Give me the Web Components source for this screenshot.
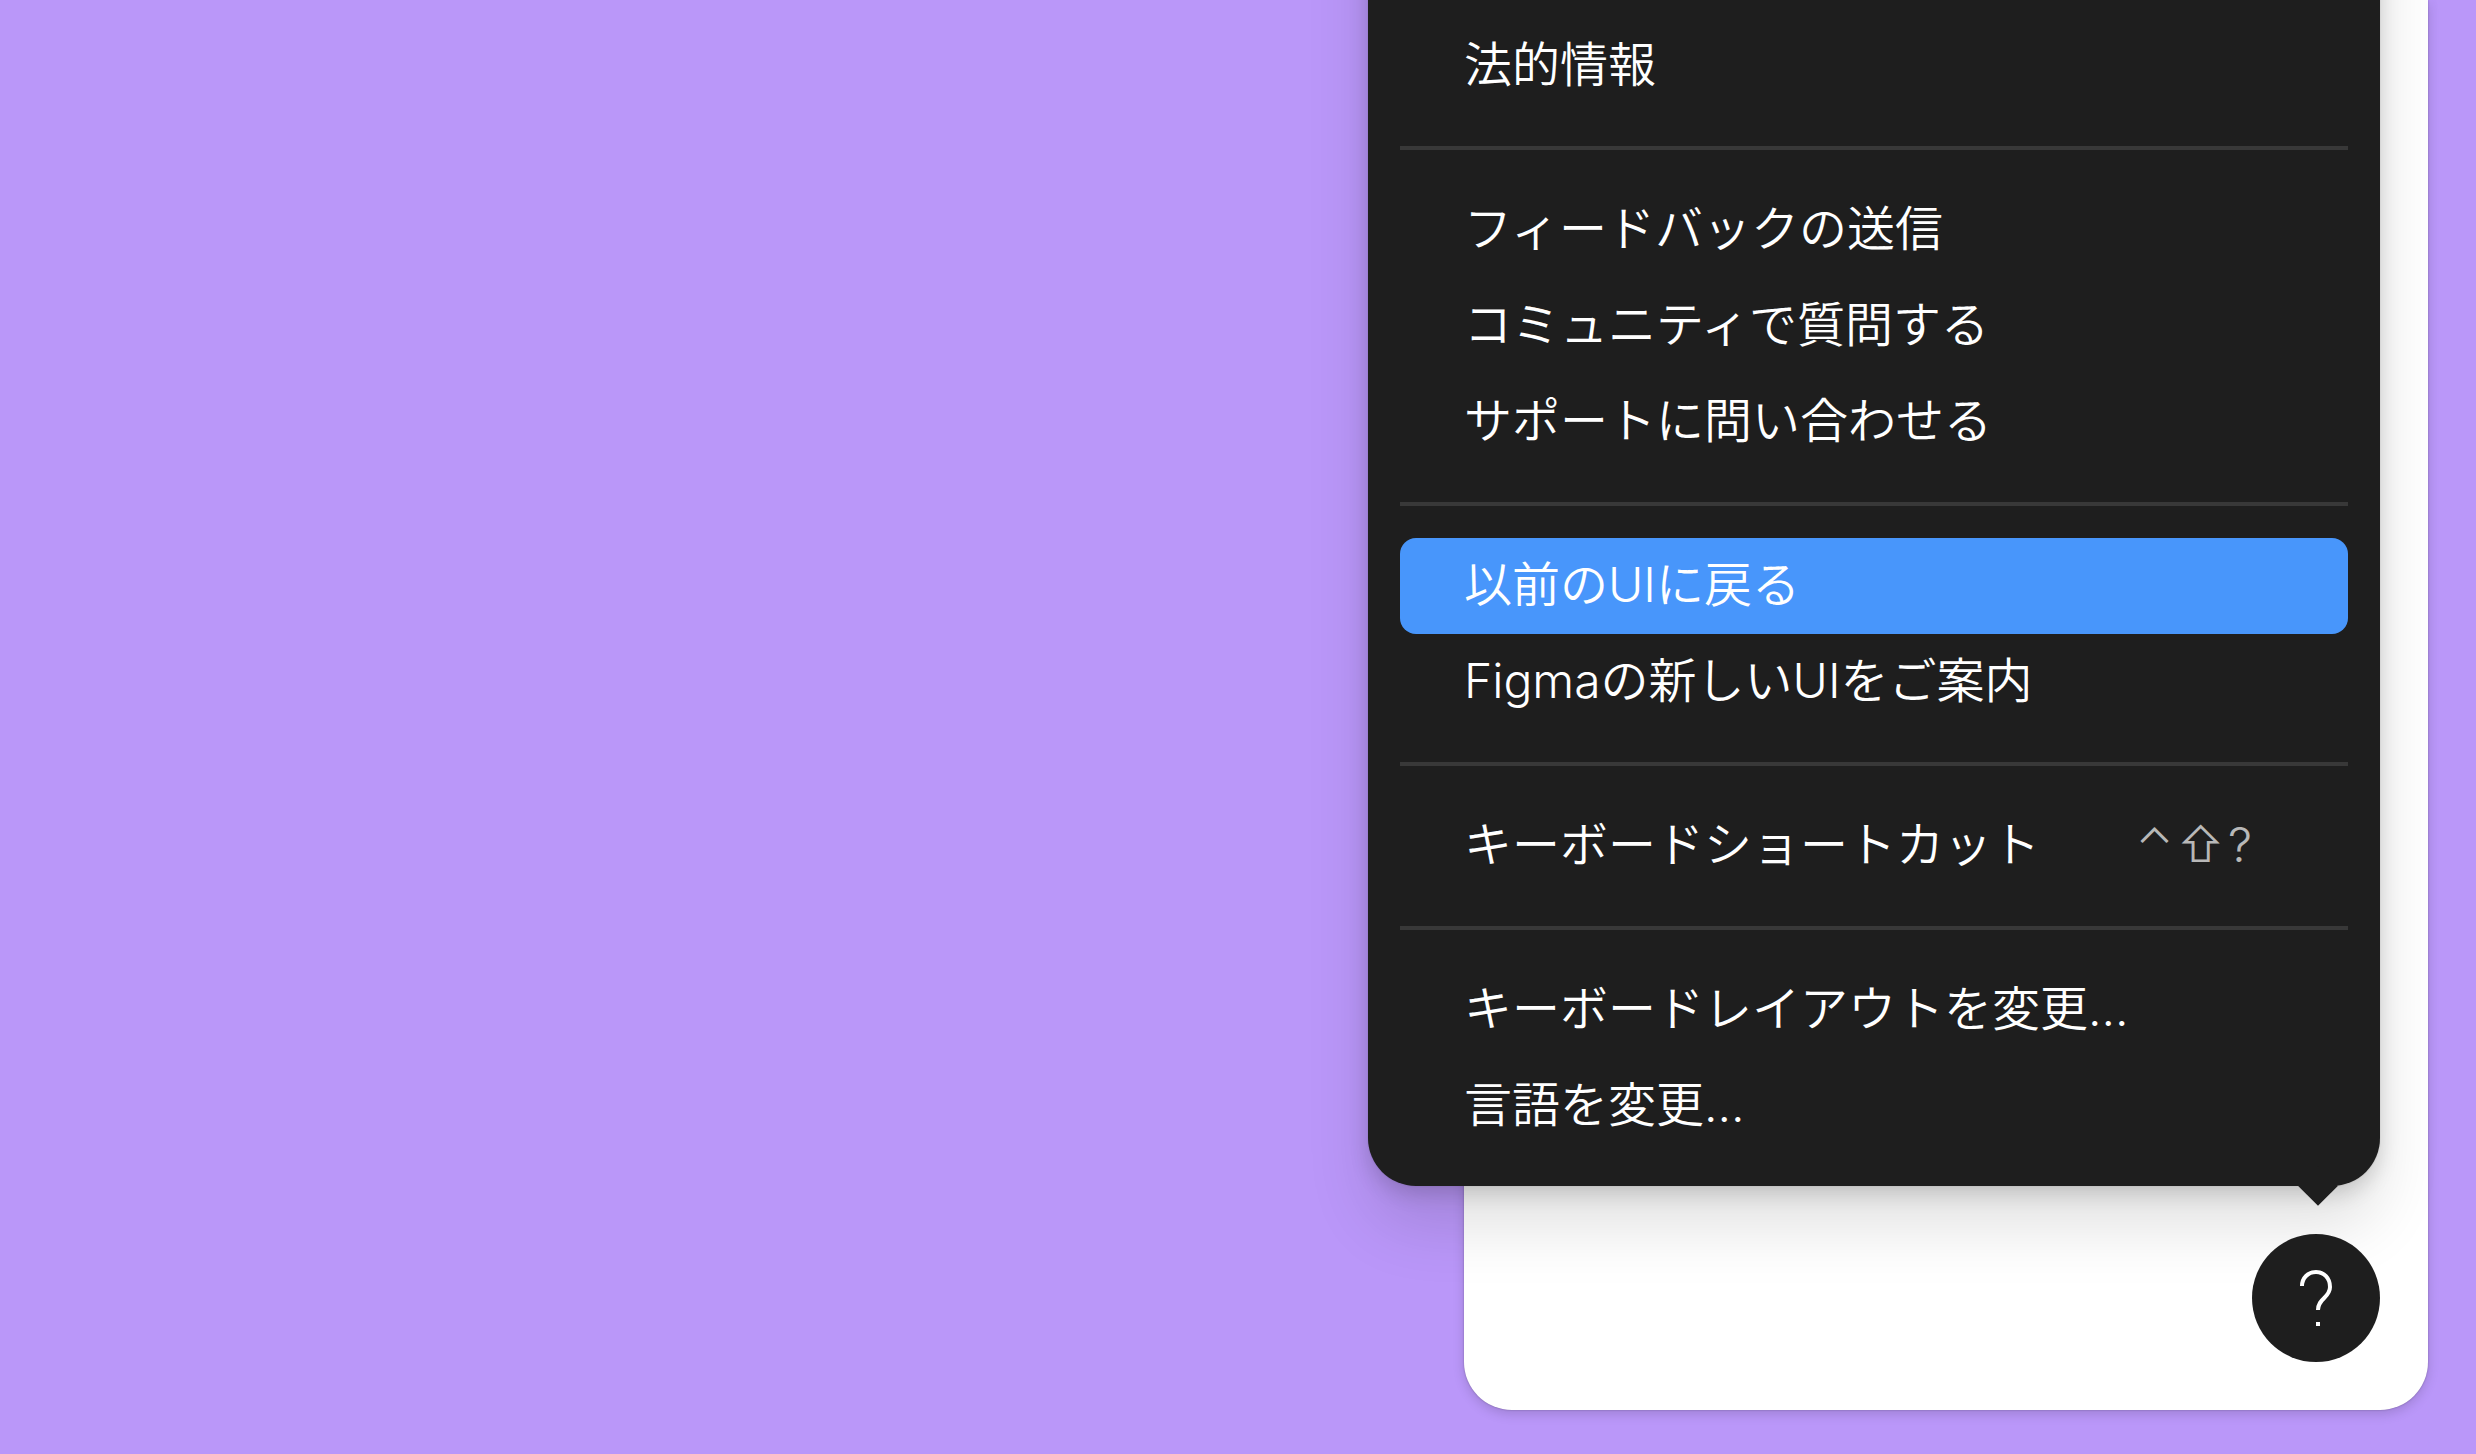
<!DOCTYPE html>
<html lang="ja">
<head>
<meta charset="utf-8">
<meta name="viewport" content="width=device-width, initial-scale=1">
<title>ヘルプ</title>
<style>
  body {
    margin: 0;
    background: #ba97f9;
    font-family: Inter, "Noto Sans CJK JP", sans-serif;
    font-weight: 350;
  }
</style>
</head>
<body>
<help-app></help-app>

<script>
class MenuItem extends HTMLElement {
  constructor() {
    super();
    this.shadowDOM = this.attachShadow({ mode: 'open' });
  }

  connectedCallback() {
    this.render();
  }

  render() {
    const keys = [...(this.getAttribute('shortcut') || '')];
    this.shadowDOM.innerHTML = `
      <style>
        :host {
          display: block;
        }

        button {
          display: flex;
          align-items: center;
          justify-content: space-between;
          gap: 64px;
          box-sizing: border-box;
          width: 100%;
          height: 96px;
          padding: 0 96px 2px 64px;
          border: 0;
          border-radius: 16px;
          background: none;
          color: #fff;
          font: inherit;
          font-size: 48px;
          line-height: 64px;
          text-align: left;
          white-space: nowrap;
          cursor: pointer;
        }

        :host([active]) button,
        button:hover {
          background: #4896fb;
        }

        .keys {
          display: flex;
          gap: 4px;
          color: rgba(255, 255, 255, 0.7);
        }

        kbd {
          font: inherit;
        }
      </style>

      <button type="button" role="menuitem">
        <span><slot></slot></span>
        ${keys.length ? `<span class="keys">${keys.map(key => `<kbd>${key}</kbd>`).join('')}</span>` : ''}
      </button>
      `
  }
}

customElements.define('menu-item', MenuItem)

class MenuGroup extends HTMLElement {
  constructor() {
    super();
    this.shadowDOM = this.attachShadow({ mode: 'open' });
  }

  connectedCallback() {
    this.render();
  }

  render() {
    this.shadowDOM.innerHTML = `
      <style>
        :host {
          display: block;
          padding: 32px 0;
          border-bottom: 4px solid #383838;
        }

        :host(:last-child) {
          border-bottom: 0;
        }
      </style>

      <slot></slot>
      `
  }
}

customElements.define('menu-group', MenuGroup)

class HelpMenu extends HTMLElement {
  constructor() {
    super();
    this.shadowDOM = this.attachShadow({ mode: 'open' });
  }

  connectedCallback() {
    this.render();
  }

  render() {
    this.shadowDOM.innerHTML = `
      <style>
        :host {
          display: block;
          box-sizing: border-box;
          min-width: 1012px;
          padding: 160px 32px 0;
          border-radius: 48px;
          background: #1e1e1e;
          box-shadow:
            0 8px 20px rgba(0, 0, 0, 0.15),
            0 40px 64px rgba(0, 0, 0, 0.12),
            0 0 2px rgba(0, 0, 0, 0.12);
        }

        .arrow {
          position: absolute;
          right: 48px;
          bottom: -14px;
          width: 28px;
          height: 28px;
          background: #1e1e1e;
          transform: rotate(45deg);
        }
      </style>

      <div role="menu"><slot></slot></div>
      <div class="arrow"></div>
      `
  }
}

customElements.define('help-menu', HelpMenu)

class HelpButton extends HTMLElement {
  constructor() {
    super();
    this.shadowDOM = this.attachShadow({ mode: 'open' });
  }

  connectedCallback() {
    this.render();
  }

  render() {
    this.shadowDOM.innerHTML = `
      <style>
        :host {
          display: block;
        }

        button {
          display: block;
          width: 128px;
          height: 128px;
          padding: 0;
          border: 0;
          border-radius: 50%;
          background: #1e1e1e;
          cursor: pointer;
        }

        svg {
          display: block;
        }
      </style>

      <button type="button" aria-label="ヘルプ">
        <svg width="128" height="128" viewBox="0 0 128 128" fill="none">
          <path d="M50 52C50 44 56 38 64 38C72 38 78 44 78 53C78 64 66 64 66 76" stroke="#fff" stroke-width="4"/>
          <rect x="64" y="88" width="4" height="4" fill="#fff"/>
        </svg>
      </button>
      `
  }
}

customElements.define('help-button', HelpButton)

class HelpApp extends HTMLElement {
  constructor() {
    super();
    this.shadowDOM = this.attachShadow({ mode: 'open' });
  }

  connectedCallback() {
    this.render();
  }

  render() {
    this.shadowDOM.innerHTML = `
      <style>
        :host {
          display: flex;
          justify-content: flex-end;
          box-sizing: border-box;
          height: 100vh;
          padding: 0 48px 44px;
          overflow: hidden;
        }

        .panel {
          display: flex;
          align-items: flex-end;
          justify-content: flex-end;
          box-sizing: border-box;
          width: 964px;
          max-width: 100%;
          padding: 48px;
          border-radius: 0 0 48px 48px;
          background: #fff;
          box-shadow:
            0 4px 12px rgba(0, 0, 0, 0.15),
            0 0 2px rgba(0, 0, 0, 0.3);
        }

        .help {
          position: relative;
        }

        /* the menu opens upwards from the help button */
        help-menu {
          position: absolute;
          right: 0;
          bottom: calc(100% + 48px);
        }

        help-button {
          position: relative;
        }
      </style>

      <main class="panel">
        <div class="help">
          <help-menu>
            <menu-group>
              <menu-item>法的情報</menu-item>
            </menu-group>
            <menu-group>
              <menu-item>フィードバックの送信</menu-item>
              <menu-item>コミュニティで質問する</menu-item>
              <menu-item>サポートに問い合わせる</menu-item>
            </menu-group>
            <menu-group>
              <menu-item active>以前のUIに戻る</menu-item>
              <menu-item>Figmaの新しいUIをご案内</menu-item>
            </menu-group>
            <menu-group>
              <menu-item shortcut="⌃⇧?">キーボードショートカット</menu-item>
            </menu-group>
            <menu-group>
              <menu-item>キーボードレイアウトを変更...</menu-item>
              <menu-item>言語を変更...</menu-item>
            </menu-group>
          </help-menu>
          <help-button></help-button>
        </div>
      </main>
      `
  }
}

customElements.define('help-app', HelpApp)
</script>
</body>
</html>
